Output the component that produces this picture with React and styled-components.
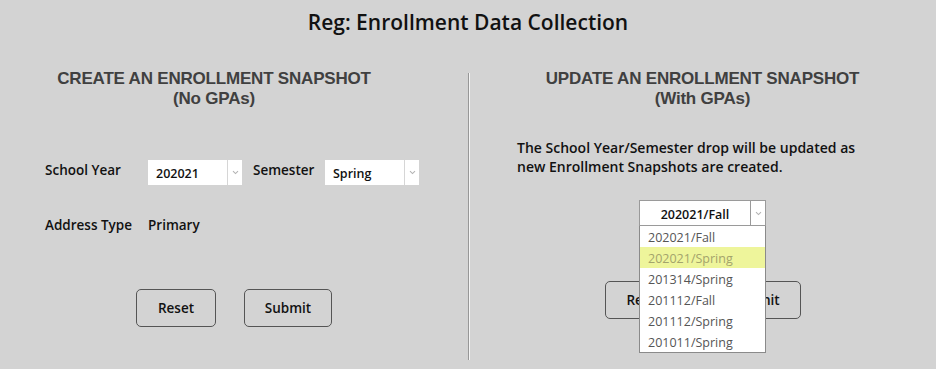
import styled, { createGlobalStyle } from "styled-components"

const GlobalStyle = createGlobalStyle`
  html, body {
    margin: 0;
    padding: 0;
    background: #d3d3d3;
  }
  body {
    font-family: "Open Sans", Lato, sans-serif;
    color: #111;
  }
`

const Page = styled.div`
  width: 936px;
  height: 369px;
  overflow: hidden;
`

const Title = styled.h1`
  margin: 0;
  padding-top: 8px;
  font-size: 21px;
  line-height: 28px;
  font-weight: 600;
  text-align: center;
  color: #111;
`

const Columns = styled.div`
  display: grid;
  grid-template-columns: 468px 468px;
  margin-top: 37px;
  height: 287px;
`

const Column = styled.section`
  display: flex;
  flex-direction: column;
  ${(p) => p.$divider && "border-left: 1px solid #979797; box-shadow: inset 1px 0 0 #f4f4f4;"}
`

const Heading = styled.h2`
  margin: -4px 0 0;
  padding-right: ${(p) => p.$shift || 0}px;
  font-family: "Liberation Sans", Arial, sans-serif;
  font-size: 17px;
  line-height: 20px;
  font-weight: 700;
  letter-spacing: -0.2px;
  color: #404040;
  text-align: center;
`

const Form = styled.div`
  display: flex;
  flex-direction: column;
  padding: 51px 0 0 45px;
`

const Row = styled.div`
  display: flex;
  align-items: flex-start;
  height: ${(p) => p.$h}px;
`

const Label = styled.span`
  width: ${(p) => p.$w}px;
  font-size: 13.5px;
  font-weight: 600;
  line-height: 18px;
  padding-top: ${(p) => p.$top || 0}px;
  color: #111;
`

const Value = styled.span`
  font-size: 13.5px;
  font-weight: 600;
  line-height: 18px;
  color: #111;
`

const Select = styled.div`
  display: flex;
  width: ${(p) => p.$w}px;
  height: ${(p) => p.$h}px;
  background: #fff;
  box-sizing: border-box;
  border: ${(p) => (p.$bordered ? "1px solid #9a9a9a" : "none")};
`

const SelectValue = styled.span`
  flex: 1;
  display: flex;
  align-items: center;
  justify-content: ${(p) => (p.$center ? "center" : "flex-start")};
  padding-left: ${(p) => (p.$center ? 0 : 8)}px;
  padding-top: 2px;
  font-size: 12.5px;
  font-weight: 600;
  color: #111;
`

const Arrow = styled.span`
  width: 14px;
  display: flex;
  align-items: center;
  justify-content: center;
  border-left: 1px solid ${(p) => (p.$dark ? "#9a9a9a" : "#d6d6d6")};
`

const Buttons = styled.div`
  display: flex;
  justify-content: center;
  gap: 28px;
  margin-top: ${(p) => p.$top}px;
`

const Button = styled.button`
  width: ${(p) => p.$w}px;
  height: 38px;
  box-sizing: border-box;
  background: transparent;
  border: 1px solid #555;
  border-radius: 5px;
  font-family: "Open Sans", Lato, sans-serif;
  font-size: 13.5px;
  font-weight: 600;
  color: #111;
  padding: 0;
`

const Note = styled.p`
  margin: 29px 0 0 48px;
  font-size: 14px;
  font-weight: 600;
  line-height: 19px;
  color: #111;
`

const DropWrap = styled.div`
  position: relative;
  width: 127px;
  margin: 24px 0 0 170px;
`

const List = styled.ul`
  position: absolute;
  top: 26px;
  left: 0;
  width: 127px;
  box-sizing: border-box;
  margin: 0;
  padding: 0;
  list-style: none;
  background: #fff;
  border: 1px solid #8a8a8a;
  border-top: none;
  z-index: 2;
`

const Item = styled.li`
  height: 21px;
  line-height: 23px;
  padding-left: 8px;
  font-size: 12.5px;
  color: ${(p) => (p.$active ? "#a3a46c" : "#555")};
  background: ${(p) => (p.$active ? "#eef59b" : "transparent")};
`

function Chevron() {
  return (
    <svg width="7" height="5" viewBox="0 0 7 5">
      <path d="M1 1.2 L3.5 3.6 L6 1.2" fill="none" stroke="#b4b4b4" strokeWidth="1.1" />
    </svg>
  )
}

const terms = [
  "202021/Fall",
  "202021/Spring",
  "201314/Spring",
  "201112/Fall",
  "201112/Spring",
  "201011/Spring",
]

export default function App() {
  return (
    <Page>
      <GlobalStyle />
      <Title>Reg: Enrollment Data Collection</Title>
      <Columns>
        <Column>
          <Heading $shift={40}>
            CREATE AN ENROLLMENT SNAPSHOT
            <br />
            (No GPAs)
          </Heading>
          <Form>
            <Row $h={56}>
              <Label $w={103} $top={1}>School Year</Label>
              <Select $w={94} $h={25}>
                <SelectValue>202021</SelectValue>
                <Arrow>
                  <Chevron />
                </Arrow>
              </Select>
              <Label $w={72} $top={1} style={{ marginLeft: 11 }}>Semester</Label>
              <Select $w={94} $h={25}>
                <SelectValue>Spring</SelectValue>
                <Arrow>
                  <Chevron />
                </Arrow>
              </Select>
            </Row>
            <Row $h={20}>
              <Label $w={103}>Address Type</Label>
              <Value>Primary</Value>
            </Row>
          </Form>
          <Buttons $top={53}>
            <Button $w={80}>Reset</Button>
            <Button $w={88}>Submit</Button>
          </Buttons>
        </Column>
        <Column $divider>
          <Heading>
            UPDATE AN ENROLLMENT SNAPSHOT
            <br />
            (With GPAs)
          </Heading>
          <Note>
            The School Year/Semester drop will be updated as
            <br />
            new Enrollment Snapshots are created.
          </Note>
          <DropWrap>
            <Select $w={127} $h={26} $bordered>
              <SelectValue $center>202021/Fall</SelectValue>
              <Arrow $dark>
                <Chevron />
              </Arrow>
            </Select>
            <List>
              {terms.map((t, i) => (
                <Item key={t} $active={i === 1}>
                  {t}
                </Item>
              ))}
            </List>
          </DropWrap>
          <Buttons $top={55}>
            <Button $w={80}>Reset</Button>
            <Button $w={88}>Submit</Button>
          </Buttons>
        </Column>
      </Columns>
    </Page>
  )
}
